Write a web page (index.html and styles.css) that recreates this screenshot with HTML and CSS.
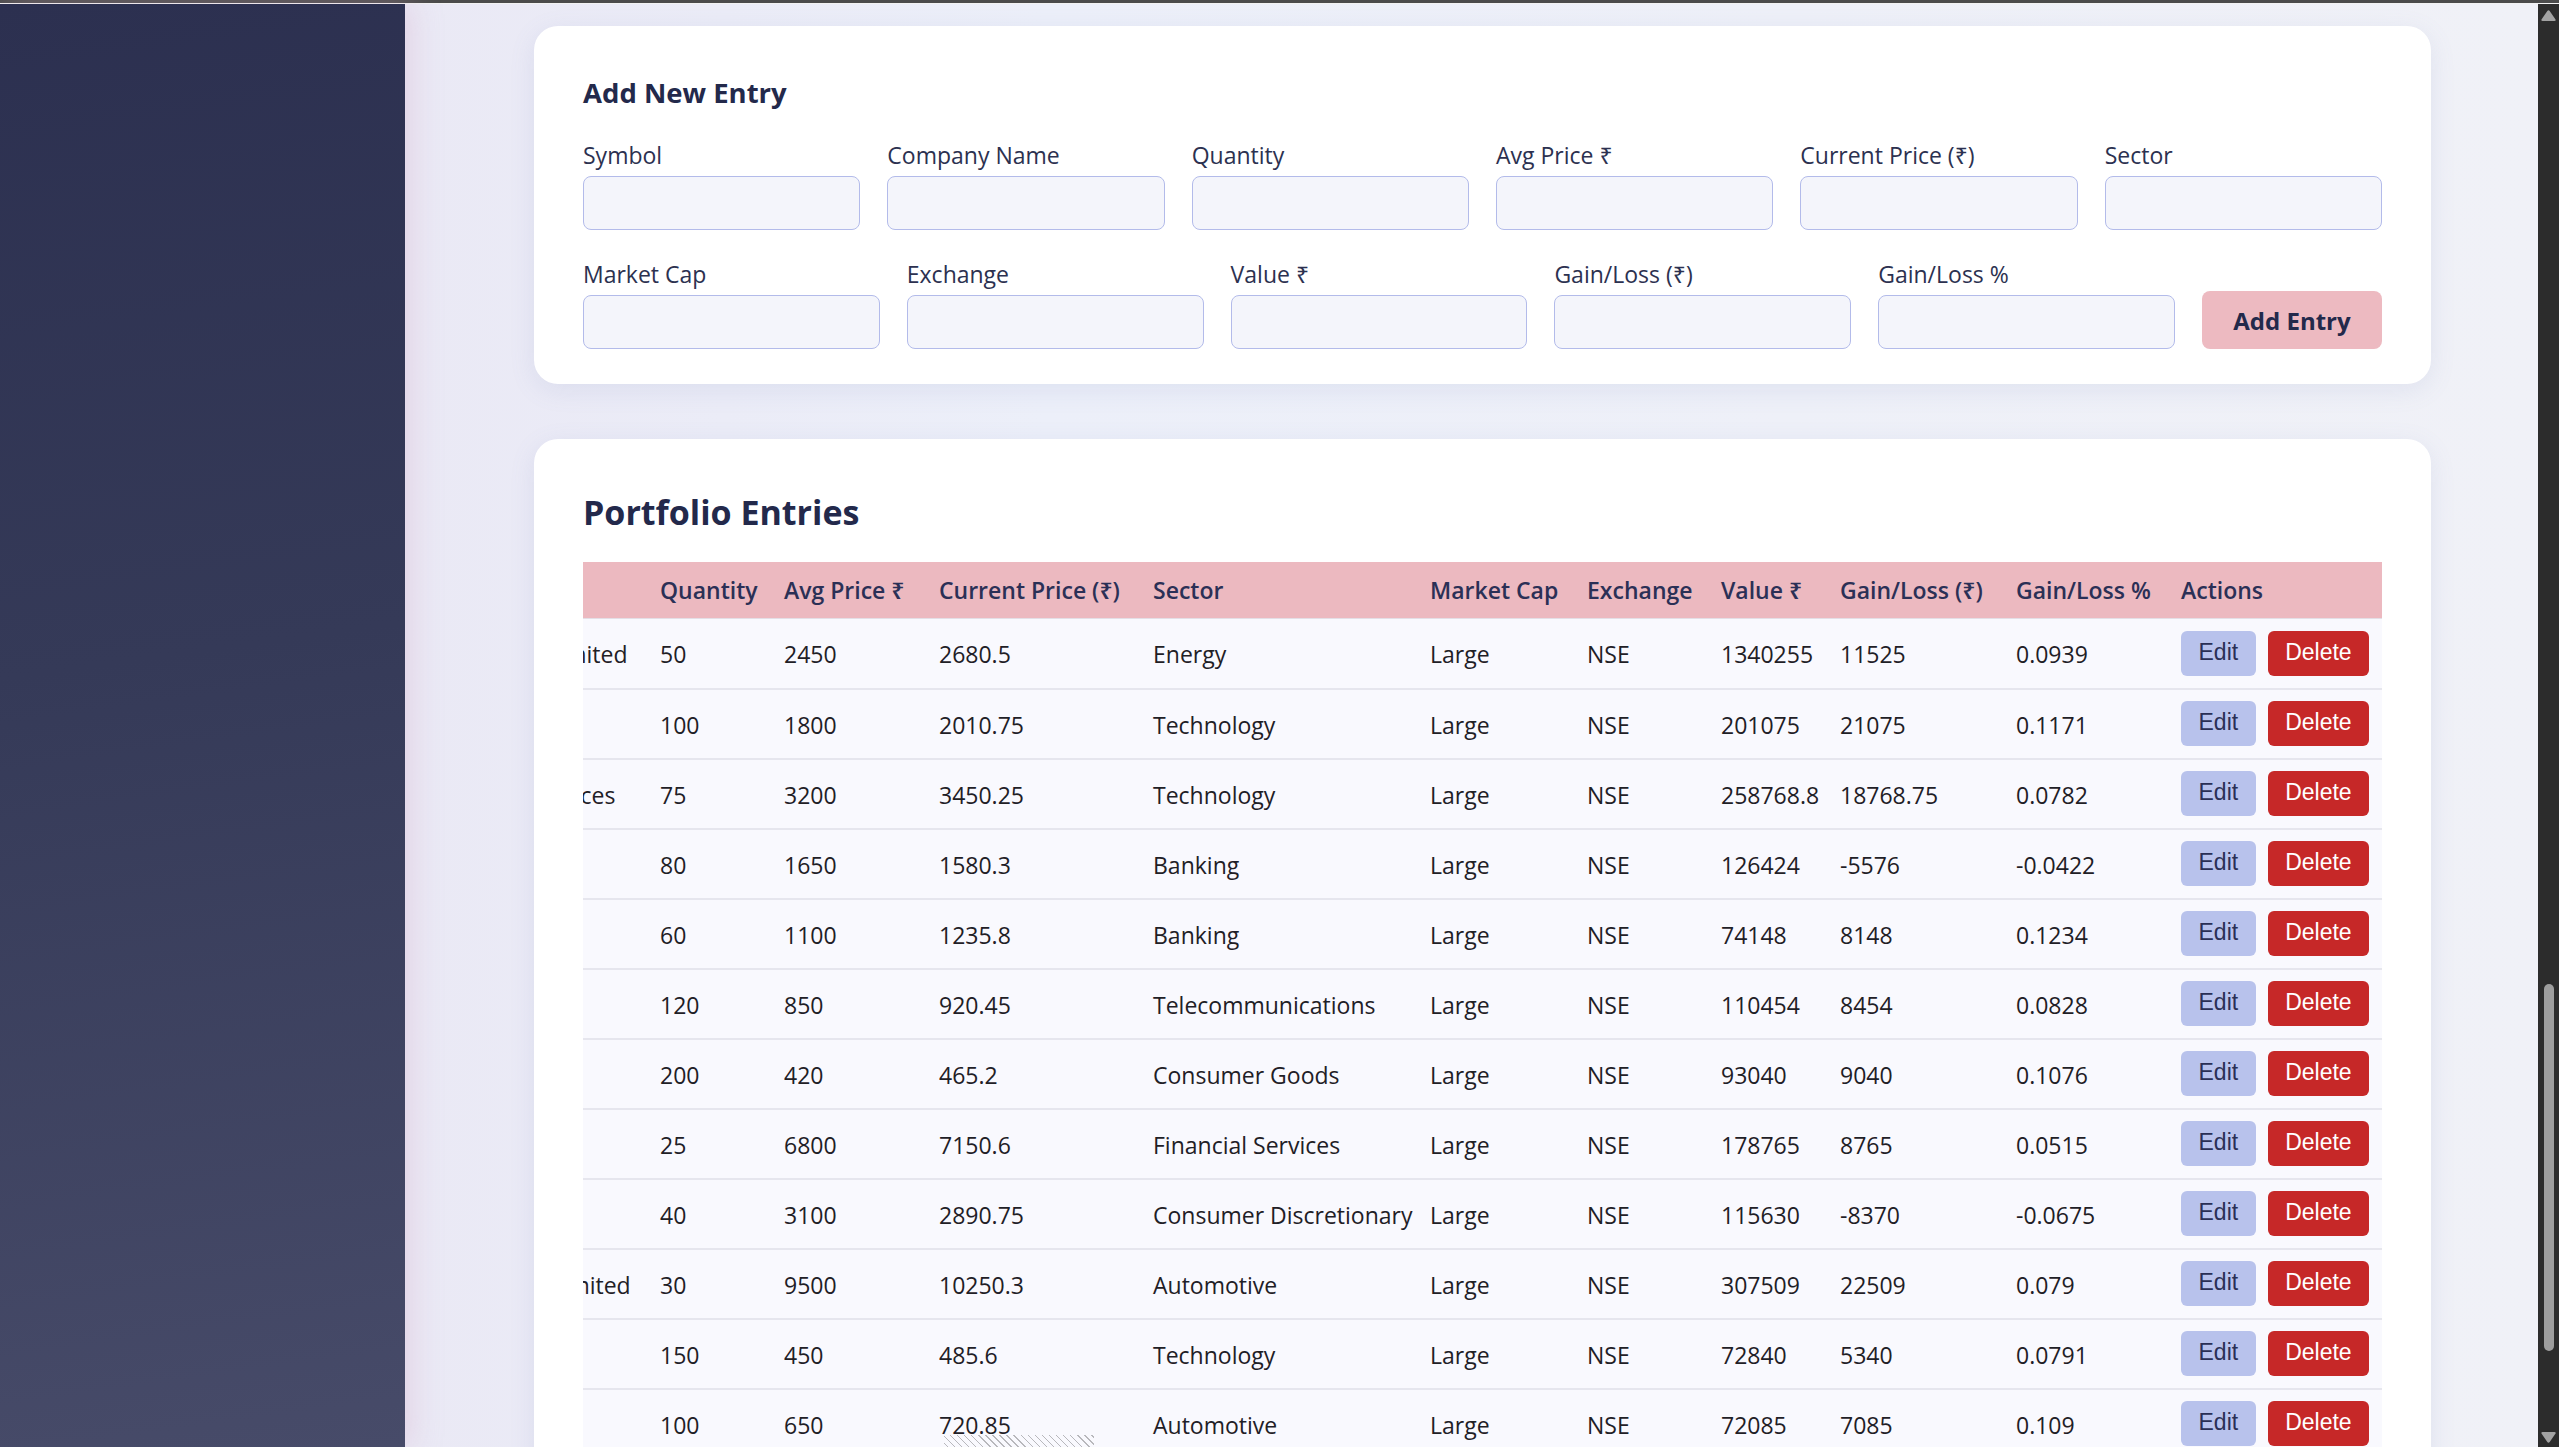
FILE: index.html
```html
<!DOCTYPE html>
<html lang="en">
<head>
<meta charset="utf-8">
<title>Portfolio</title>
<link rel="stylesheet" href="styles.css">
</head>
<body>
<div class="topbar"></div>
<div class="window">
  <aside class="sidebar"></aside>
  <main class="main">
    <section class="card entry-card">
      <h3 class="card-title">Add New Entry</h3>
      <form class="form-grid">
        <div class="field"><label>Symbol</label><input type="text"></div>
        <div class="field"><label>Company Name</label><input type="text"></div>
        <div class="field"><label>Quantity</label><input type="text"></div>
        <div class="field"><label>Avg Price ₹</label><input type="text"></div>
        <div class="field"><label>Current Price (₹)</label><input type="text"></div>
        <div class="field"><label>Sector</label><input type="text"></div>
        <div class="field"><label>Market Cap</label><input type="text"></div>
        <div class="field"><label>Exchange</label><input type="text"></div>
        <div class="field"><label>Value ₹</label><input type="text"></div>
        <div class="field"><label>Gain/Loss (₹)</label><input type="text"></div>
        <div class="field"><label>Gain/Loss %</label><input type="text"></div>
        <button type="button" class="add-btn">Add Entry</button>
      </form>
    </section>

    <section class="card table-card">
      <h2 class="table-title">Portfolio Entries</h2>
      <div class="table-wrap">
        <table class="tbl">
          <colgroup>
            <col class="c-sym"><col class="c-co"><col class="c-qty"><col class="c-avg"><col class="c-cur"><col class="c-sec"><col class="c-cap"><col class="c-exc"><col class="c-val"><col class="c-gl"><col class="c-glp"><col class="c-act">
          </colgroup>
          <thead>
            <tr><th>Symbol</th><th>Company Name</th><th>Quantity</th><th>Avg Price ₹</th><th>Current Price (₹)</th><th>Sector</th><th>Market Cap</th><th>Exchange</th><th>Value ₹</th><th>Gain/Loss (₹)</th><th>Gain/Loss %</th><th>Actions</th></tr>
          </thead>
          <tbody>
            <tr><td>RELIANCE</td><td>Reliance Industries Limited</td><td>50</td><td>2450</td><td>2680.5</td><td>Energy</td><td>Large</td><td>NSE</td><td>1340255</td><td>11525</td><td>0.0939</td><td class="act"><button class="btn-edit">Edit</button><button class="btn-del">Delete</button></td></tr>
            <tr><td>INFY</td><td>Infosys Limited</td><td>100</td><td>1800</td><td>2010.75</td><td>Technology</td><td>Large</td><td>NSE</td><td>201075</td><td>21075</td><td>0.1171</td><td class="act"><button class="btn-edit">Edit</button><button class="btn-del">Delete</button></td></tr>
            <tr><td>TCS</td><td>Tata Consultancy Services</td><td>75</td><td>3200</td><td>3450.25</td><td>Technology</td><td>Large</td><td>NSE</td><td>258768.8</td><td>18768.75</td><td>0.0782</td><td class="act"><button class="btn-edit">Edit</button><button class="btn-del">Delete</button></td></tr>
            <tr><td>HDFCBANK</td><td>HDFC Bank Limited</td><td>80</td><td>1650</td><td>1580.3</td><td>Banking</td><td>Large</td><td>NSE</td><td>126424</td><td>-5576</td><td>-0.0422</td><td class="act"><button class="btn-edit">Edit</button><button class="btn-del">Delete</button></td></tr>
            <tr><td>ICICIBANK</td><td>ICICI Bank Limited</td><td>60</td><td>1100</td><td>1235.8</td><td>Banking</td><td>Large</td><td>NSE</td><td>74148</td><td>8148</td><td>0.1234</td><td class="act"><button class="btn-edit">Edit</button><button class="btn-del">Delete</button></td></tr>
            <tr><td>BHARTIARTL</td><td>Bharti Airtel Limited</td><td>120</td><td>850</td><td>920.45</td><td>Telecommunications</td><td>Large</td><td>NSE</td><td>110454</td><td>8454</td><td>0.0828</td><td class="act"><button class="btn-edit">Edit</button><button class="btn-del">Delete</button></td></tr>
            <tr><td>ITC</td><td>ITC Limited</td><td>200</td><td>420</td><td>465.2</td><td>Consumer Goods</td><td>Large</td><td>NSE</td><td>93040</td><td>9040</td><td>0.1076</td><td class="act"><button class="btn-edit">Edit</button><button class="btn-del">Delete</button></td></tr>
            <tr><td>BAJFINANCE</td><td>Bajaj Finance Limited</td><td>25</td><td>6800</td><td>7150.6</td><td>Financial Services</td><td>Large</td><td>NSE</td><td>178765</td><td>8765</td><td>0.0515</td><td class="act"><button class="btn-edit">Edit</button><button class="btn-del">Delete</button></td></tr>
            <tr><td>TITAN</td><td>Titan Company Ltd</td><td>40</td><td>3100</td><td>2890.75</td><td>Consumer Discretionary</td><td>Large</td><td>NSE</td><td>115630</td><td>-8370</td><td>-0.0675</td><td class="act"><button class="btn-edit">Edit</button><button class="btn-del">Delete</button></td></tr>
            <tr><td>MARUTI</td><td>Maruti Suzuki India Limited</td><td>30</td><td>9500</td><td>10250.3</td><td>Automotive</td><td>Large</td><td>NSE</td><td>307509</td><td>22509</td><td>0.079</td><td class="act"><button class="btn-edit">Edit</button><button class="btn-del">Delete</button></td></tr>
            <tr><td>WIPRO</td><td>Wipro Limited</td><td>150</td><td>450</td><td>485.6</td><td>Technology</td><td>Large</td><td>NSE</td><td>72840</td><td>5340</td><td>0.0791</td><td class="act"><button class="btn-edit">Edit</button><button class="btn-del">Delete</button></td></tr>
            <tr><td>TATAMOTORS</td><td>Tata Motors Limited</td><td>100</td><td>650</td><td class="hatch-cell">720.85<span class="hatch"></span></td><td>Automotive</td><td>Large</td><td>NSE</td><td>72085</td><td>7085</td><td>0.109</td><td class="act"><button class="btn-edit">Edit</button><button class="btn-del">Delete</button></td></tr>
          </tbody>
        </table>
      </div>
    </section>
  </main>
  <div class="scrollbar">
    <svg class="sb-arrow" width="15" height="11" viewBox="0 0 15 11"><path d="M6.3 1 Q7.5 -0.5 8.7 1 L14.5 9.6 Q15 11 13.5 11 L1.5 11 Q0 11 0.5 9.6 Z" fill="#a3a3a3"/></svg>
    <div class="sb-thumb"></div>
    <svg class="sb-arrow sb-down" width="15" height="11" viewBox="0 0 15 11"><path d="M6.3 10 Q7.5 11.5 8.7 10 L14.5 1.4 Q15 0 13.5 0 L1.5 0 Q0 0 0.5 1.4 Z" fill="#a3a3a3"/></svg>
  </div>
</div>
</body>
</html>
```

FILE: styles.css
```css
* { box-sizing: border-box; }

html, body {
  margin: 0;
  height: 100%;
  overflow: hidden;
}

body {
  font-family: "Open Sans", "Noto Sans", sans-serif;
  color: #1f2026;
  display: flex;
  flex-direction: column;
  background: #2c2c2c;
}

.topbar {
  flex: 0 0 4px;
  background: #4b4b4b;
  border-bottom: 1px solid #f2f2f2;
}

.window {
  flex: 1;
  display: flex;
  min-height: 0;
}

.sidebar {
  flex: 0 0 405px;
  background: linear-gradient(172deg, #2c3050 0%, #353a58 45%, #474b69 100%);
  box-shadow: 6px 0 28px rgba(214, 170, 200, 0.35);
  position: relative;
  z-index: 1;
}

.main {
  flex: 1;
  min-width: 0;
  overflow: hidden;
  padding: 22px 107px 0 129px;
  background: linear-gradient(90deg, #eae9f5 0%, #eceff9 30%, #f0f1f7 100%);
  display: flex;
  flex-direction: column;
  gap: 55px;
}

.card {
  background: #ffffff;
  border-radius: 24px;
  box-shadow: 0 6px 26px rgba(110, 120, 180, 0.12);
  flex: none;
}

.entry-card {
  padding: 50px 49px 35px;
}

.card-title {
  margin: 0 0 30px;
  font-size: 27.5px;
  line-height: 34px;
  font-weight: 700;
  color: #23294b;
}

.form-grid {
  display: flex;
  flex-wrap: wrap;
  column-gap: 27px;
  row-gap: 29px;
  align-items: flex-end;
}

.field {
  flex: 1 1 250px;
  display: flex;
  flex-direction: column;
  gap: 6px;
}

.field label {
  font-size: 23px;
  line-height: 30px;
  color: #2c3150;
}

.field input {
  height: 54px;
  border: 1px solid #b3bbea;
  border-radius: 8px;
  background: #f4f5fb;
  font: inherit;
  padding: 0 14px;
}

.add-btn {
  flex: 0 0 180px;
  height: 58px;
  border: none;
  border-radius: 8px;
  background: #edbac1;
  color: #23294b;
  font-family: "Open Sans", "Noto Sans", sans-serif;
  font-size: 24px;
  font-weight: 700;
  padding: 0;
}

.table-card {
  padding: 52px 49px 40px;
}

.table-title {
  margin: 0 0 29px;
  font-size: 34px;
  line-height: 42px;
  font-weight: 700;
  color: #23294b;
}

.table-wrap {
  display: flex;
  justify-content: flex-end;
  overflow: hidden;
}

.tbl {
  flex: none;
  table-layout: fixed;
  width: 2205px;
  border-collapse: collapse;
  font-size: 23px;
  line-height: 30px;
}

.c-sym { width: 150px; }
.c-co { width: 321px; }
.c-qty { width: 124px; }
.c-avg { width: 155px; }
.c-cur { width: 214px; }
.c-sec { width: 277px; }
.c-cap { width: 157px; }
.c-exc { width: 134px; }
.c-val { width: 119px; }
.c-gl { width: 176px; }
.c-glp { width: 165px; }
.c-act { width: 213px; }

.tbl th {
  background: #ecb9c0;
  color: #2b3056;
  font-weight: 600;
  text-align: left;
  padding: 13px 12px;
  white-space: nowrap;
  border-bottom: 1px solid #e4dfe6;
}

.tbl tbody tr {
  height: 70px;
  background: #f9f9fe;
}

.tbl td {
  padding: 2px 12px 0;
  white-space: nowrap;
  overflow: hidden;
  border-bottom: 2px solid #e6e6ee;
  vertical-align: middle;
  color: #1f2026;
}

.tbl td.act {
  padding: 0 12px;
  overflow: visible;
}

.act button {
  height: 45px;
  border: none;
  border-radius: 6px;
  font-family: "Liberation Sans", Arial, sans-serif;
  font-size: 23px;
  padding: 0 17.5px 2px;
  vertical-align: middle;
}

.btn-edit {
  background: #b8c2ec;
  color: #2a2f55;
  margin-right: 12px;
}

.btn-del {
  background: #c62828;
  color: #ffffff;
}

.hatch-cell {
  position: relative;
}

.hatch {
  position: absolute;
  left: 17px;
  top: 45px;
  width: 150px;
  height: 30px;
  background: repeating-linear-gradient(45deg, #b8b8bc 0 1px, transparent 1px 5px);
}

.scrollbar {
  flex: 0 0 21px;
  background: #2c2c2c;
  display: flex;
  flex-direction: column;
  align-items: center;
}

.sb-arrow {
  margin-top: 6px;
  flex: none;
}

.sb-thumb {
  width: 10px;
  height: 367px;
  margin-top: 963px;
  border-radius: 5px;
  background: #9e9e9e;
  flex: none;
}

.sb-down {
  margin-top: 81px;
}
```
